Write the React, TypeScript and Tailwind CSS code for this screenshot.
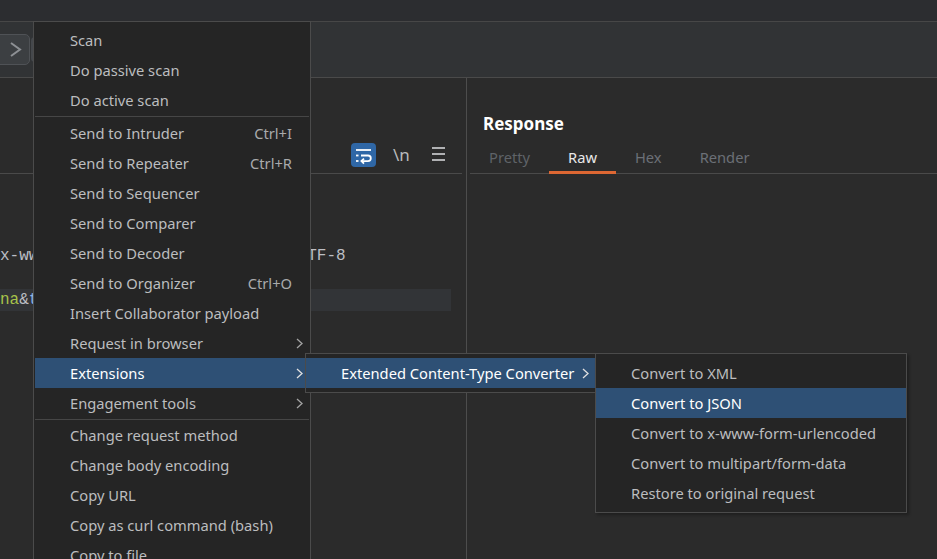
import React from 'react';

type Item = { label: string; shortcut?: string; sub?: boolean; active?: boolean };

const mainGroups: Item[][] = [
  [{ label: 'Scan' }, { label: 'Do passive scan' }, { label: 'Do active scan' }],
  [
    { label: 'Send to Intruder', shortcut: 'Ctrl+I' },
    { label: 'Send to Repeater', shortcut: 'Ctrl+R' },
    { label: 'Send to Sequencer' },
    { label: 'Send to Comparer' },
    { label: 'Send to Decoder' },
    { label: 'Send to Organizer', shortcut: 'Ctrl+O' },
    { label: 'Insert Collaborator payload' },
    { label: 'Request in browser', sub: true },
    { label: 'Extensions', sub: true, active: true },
    { label: 'Engagement tools', sub: true },
  ],
  [
    { label: 'Change request method' },
    { label: 'Change body encoding' },
    { label: 'Copy URL' },
    { label: 'Copy as curl command (bash)' },
    { label: 'Copy to file' },
    { label: 'Paste from file' },
  ],
];

const converterItems: Item[] = [
  { label: 'Convert to XML' },
  { label: 'Convert to JSON', active: true },
  { label: 'Convert to x-www-form-urlencoded' },
  { label: 'Convert to multipart/form-data' },
  { label: 'Restore to original request' },
];

function Chevron({ color = '#a3a3a3' }: { color?: string }) {
  return (
    <svg width="7" height="11" viewBox="0 0 7 11" fill="none">
      <path d="M1 1 L6 5.5 L1 10" stroke={color} strokeWidth="1.3" />
    </svg>
  );
}

function MenuRow({ item }: { item: Item }) {
  return (
    <div
      className={`flex items-center h-[30px] leading-[30px] pl-[35px] whitespace-nowrap ${
        item.active ? 'bg-[#2e5075] text-white' : 'text-[#bcbdbf]'
      }`}
    >
      <span className="flex-1">{item.label}</span>
      {item.shortcut && <span className="text-[#a9aaac]">{item.shortcut}</span>}
      <div className="w-[17px] pl-[4px] flex items-center">
        {item.sub && <Chevron color={item.active ? '#e0e0e0' : '#a3a3a3'} />}
      </div>
    </div>
  );
}

function Separator({ tight }: { tight?: boolean }) {
  return (
    <div className={tight ? 'pt-px' : 'py-px'}>
      <div className="h-px bg-[#464646]" />
    </div>
  );
}

function WrapIcon() {
  return (
    <div className="w-[25px] h-[24px] rounded-[4px] bg-[#2f67a6] flex items-center justify-center">
      <svg width="25" height="24" viewBox="0 0 25 24" fill="none" stroke="#ffffff" strokeWidth="1.8">
        <path d="M5 7 H20" />
        <path d="M5 12.5 H7.5" />
        <path d="M10 12.5 H17 a2.8 2.8 0 0 1 0 5.6 H10.5" />
        <path d="M13 15.6 L10.4 18.1 L13 20.6" />
        <path d="M5 18 H7.5" />
      </svg>
    </div>
  );
}

export default function App() {
  return (
    <div className="relative w-[937px] h-[559px] overflow-hidden bg-[#2b2b2b] font-['Noto_Sans',sans-serif] text-[15px]">
      {/* title strip */}
      <div className="h-[22px] bg-[#2c2d30] border-b border-[#474747]" />

      {/* toolbar */}
      <div className="h-[56px] bg-[#313335] border-b border-[#4a4a4a] flex items-center gap-px">
        <div className="-ml-[6px] w-[36px] h-[31px] rounded-[5px] bg-[#3c3f42] border border-[#4f5256] flex items-center justify-center pl-[6px]">
          <svg width="13" height="17" viewBox="0 0 13 17" fill="none">
            <path d="M2 2 L11 8.5 L2 15" stroke="#8d9094" strokeWidth="2" />
          </svg>
        </div>
        <div className="w-[36px] h-[25px] rounded-[4px] bg-[#45484c]" />
      </div>

      <div className="flex h-[481px]">
        {/* request panel */}
        <div className="w-[467px] border-r border-[#4d4d4d] flex flex-col">
          <div className="h-[95px] flex items-end justify-end pb-[6px] pr-[21px]">
            <WrapIcon />
            <span className="ml-[17px] w-[16px] text-[17px] leading-[24px] text-[#b9babc]">\n</span>
            <div className="ml-[23px] w-[13px] flex flex-col gap-[4px] mb-[6px]">
              <div className="h-[2px] bg-[#b0b1b3]" />
              <div className="h-[2px] bg-[#b0b1b3]" />
              <div className="h-[2px] bg-[#b0b1b3]" />
            </div>
          </div>
          <div className="h-px bg-[#4a4a4a] mr-[4px]" />
          <div className="pt-[5px] font-['Liberation_Mono',monospace] text-[16px] leading-[22px] text-[#bcbec4] whitespace-pre">
            <div className="h-[22px]" />
            <div className="h-[22px]" />
            <div className="h-[22px]" />
            <div className="h-[22px]">x-www-form-urlencoded; charset=UTF-8</div>
            <div className="h-[22px]" />
            <div className="h-[22px] bg-[#323437] mr-[15px]">
              <span className="text-[#a6c24a]">na</span>
              <span>&amp;</span>
              <span className="text-[#8fb2e3]">type</span>
              <span>=</span>
              <span className="text-[#a6c24a]">json</span>
            </div>
          </div>
        </div>

        {/* response panel */}
        <div className="flex-1 flex flex-col pl-[3px]">
          <div className="pt-[34px] pl-[13px] h-[58px] text-[17px] leading-[24px] font-bold text-white">Response</div>
          <div className="flex border-b border-[#4a4a4a] text-[14.7px]">
            {['Pretty', 'Raw', 'Hex', 'Render'].map((t) => (
              <div
                key={t}
                className={`relative h-[37px] pt-[11px] px-[19px] leading-[20px] ${
                  t === 'Raw' ? 'text-[#e8e8e8]' : t === 'Pretty' ? 'text-[#5f6368]' : 'text-[#6b7077]'
                }`}
              >
                {t}
                {t === 'Raw' && <div className="absolute left-0 right-0 -bottom-px h-[3px] bg-[#dd6733]" />}
              </div>
            ))}
          </div>
        </div>
      </div>

      {/* context menu */}
      <div className="absolute left-[33px] top-[21px] w-[278px] bg-[#252525] border border-[#4b4b4b] pt-[3px] px-px text-[14.7px]">
        {mainGroups.map((g, i) => (
          <div key={i}>
            {i > 0 && <Separator tight={i === 2} />}
            {g.map((it) => (
              <MenuRow key={it.label} item={it} />
            ))}
          </div>
        ))}
      </div>

      {/* Extensions submenu */}
      <div className="absolute left-[305px] top-[353px] w-[291px] bg-[#252525] border border-[#4b4b4b] pt-[4px] pb-[4px] text-[14.7px]">
        <MenuRow item={{ label: 'Extended Content-Type Converter', sub: true, active: true }} />
      </div>

      {/* converter submenu */}
      <div className="absolute left-[595px] top-[353px] w-[312px] bg-[#252525] border border-[#4b4b4b] pt-[4px] pb-[4px] text-[14.7px] shadow-[2px_2px_3px_rgba(0,0,0,0.3)]">
        {converterItems.map((it) => (
          <MenuRow key={it.label} item={it} />
        ))}
      </div>
    </div>
  );
}
